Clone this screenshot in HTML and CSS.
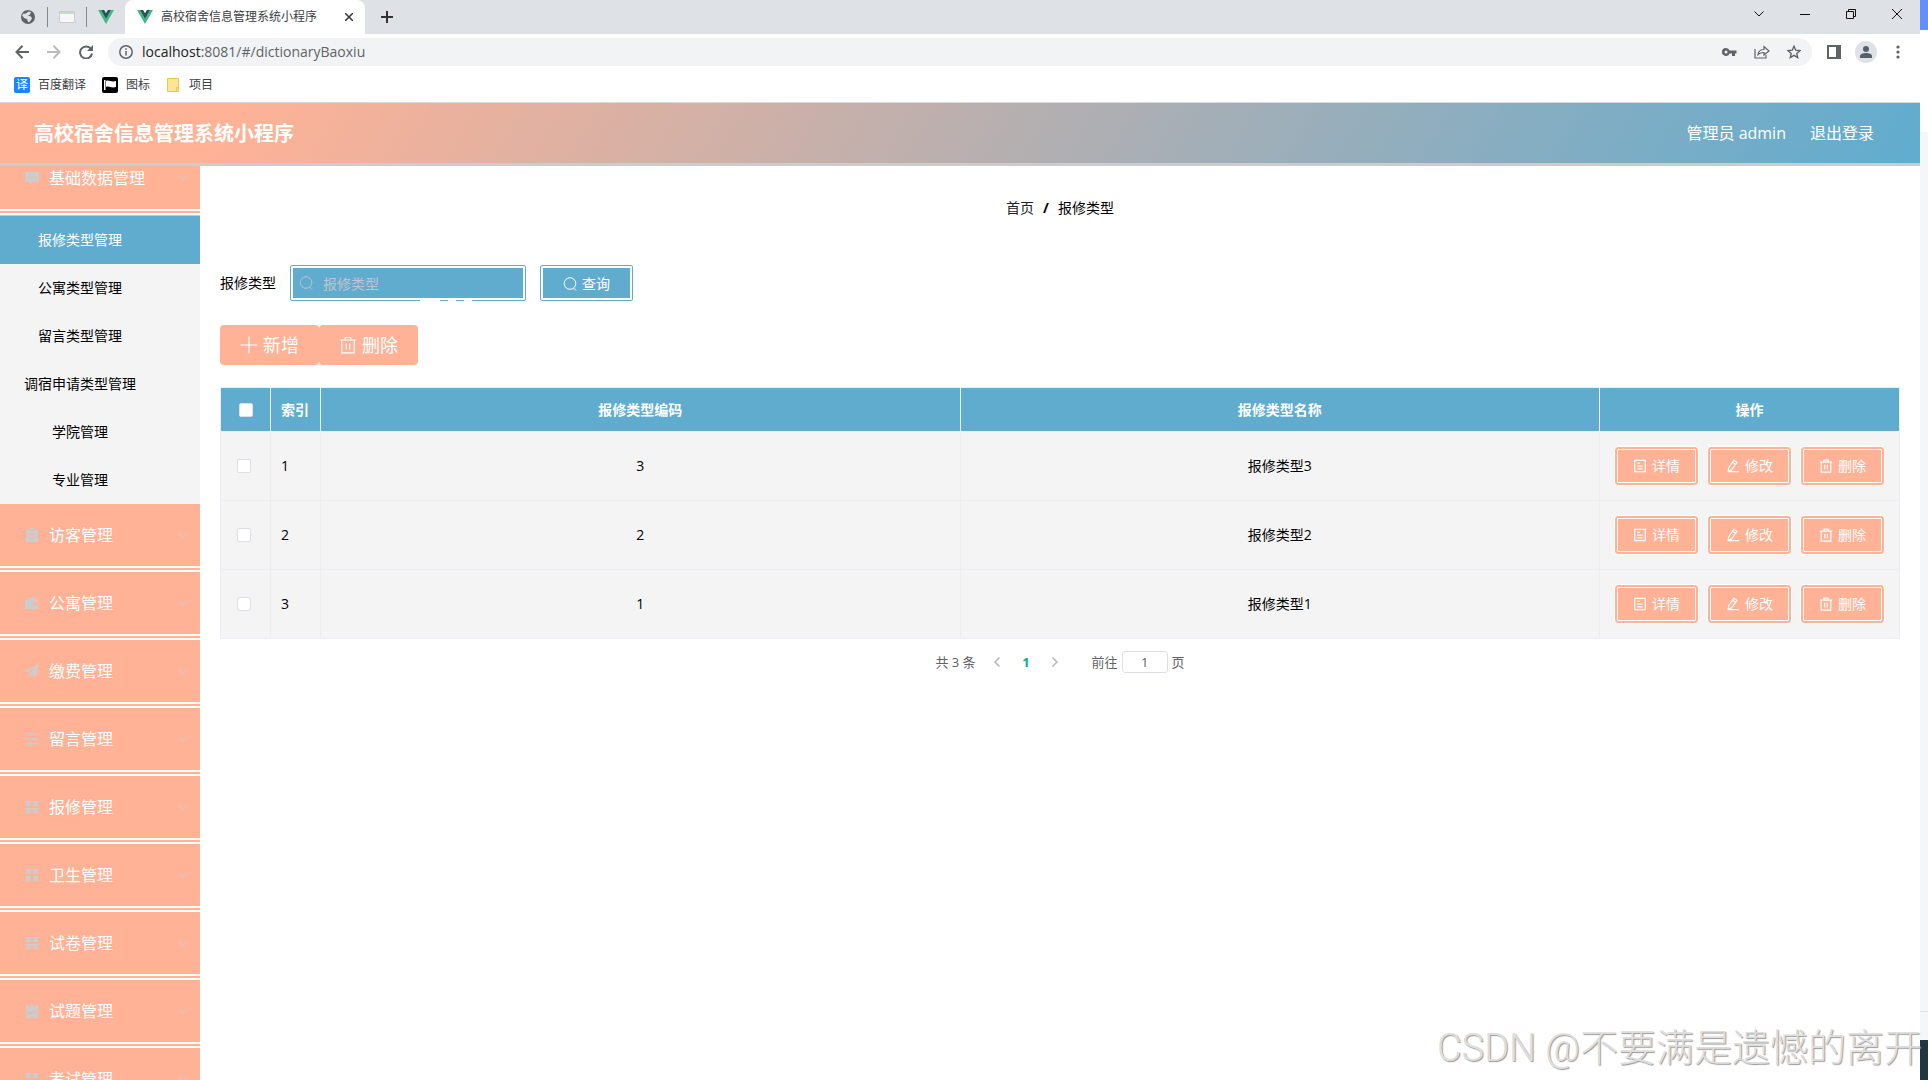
FILE: index.html
```html
<!DOCTYPE html>
<html lang="zh-CN">
<head>
<meta charset="utf-8">
<title>高校宿舍信息管理系统小程序</title>
<link rel="stylesheet" href="styles.css">
</head>
<body>
<svg class="defs" aria-hidden="true">
  <symbol id="vue" viewBox="0 0 16 14"><path fill="#41b883" d="M0 0h6l2 3.4L10 0h6L8 14z"/><path fill="#35495e" d="M3.2 0H6l2 3.4L10 0h2.800L8 8.400z"/></symbol>
  <symbol id="search" viewBox="0 0 14 14"><circle cx="7" cy="6.500" r="5.800"/><path d="M10.500 11l2.500 2.500"/></symbol>
  <symbol id="trash" viewBox="0 0 16 16"><path d="M1 3.500h14M5.500 3.200V1.300h5v1.900M2.500 3.500V15h11V3.500M6.500 6.500v5.500M9.500 6.500v5.500"/></symbol>
  <symbol id="plus" viewBox="0 0 16 16"><path d="M8 .5v15M.5 8h15"/></symbol>
  <symbol id="doc" viewBox="0 0 16 16"><path d="M2 1.500h12v13H2zM5 5h3M5 8.200h6M5 11.300h6"/></symbol>
  <symbol id="edit" viewBox="0 0 16 16"><path d="M2.500 14l.6-4L9 1.500l3.500 2.300L6.500 12.300zM7.500 3.700l3.500 2.300M2.500 14.500H15"/></symbol>
  <symbol id="down" viewBox="0 0 10 6"><path d="M.5 .5L5 5l4.500-4.500"/></symbol>
  <symbol id="grid" viewBox="0 0 14 14"><path d="M1 1h5v5H1zM8 1h5v5H8zM1 8h5v5H1zM8 8h5v5H8z"/></symbol>
  <symbol id="chat" viewBox="0 0 14 14"><path fill-rule="evenodd" d="M0 1h14v10H7.500L4.500 13.500V11H0zM3 5.500v1.200h1.200V5.500zM6.400 5.500v1.200h1.200V5.500zM9.800 5.500v1.200H11V5.500z"/></symbol>
  <symbol id="clip" viewBox="0 0 14 14"><path fill-rule="evenodd" d="M1 1.500h3V3h6V1.500h3V14H1zM3.500 5.500v1h7v-1zM3.500 9.500v1h7v-1zM5 0h4v2H5z"/></symbol>
  <symbol id="wallet" viewBox="0 0 14 14"><path fill-rule="evenodd" d="M0 3.500h3L8 .5l3 3h2V6h-3a2 2 0 0 0 0 4h3v3H0zM10 7.300h3.500v1.400H10z"/></symbol>
  <symbol id="plane" viewBox="0 0 14 14"><path d="M14 0L0 7l3 1.500L11 3 4.500 9.500V14l2.500-3 4 1.500z"/></symbol>
  <symbol id="sliders" viewBox="0 0 14 14"><path d="M0 1.500h3.500a1.500 1.500 0 0 1 2.500 0h7v1H6a1.500 1.500 0 0 1-2.500 0H0zM0 6.300h8a1.700 1.700 0 0 1 3 0h2v1.500h-2a1.700 1.700 0 0 1-3 0H0zM0 11.300h4.500a1.500 1.500 0 0 1 3 0H13v1H7.500a1.500 1.500 0 0 1-3 0H0z"/></symbol>
  <symbol id="check" viewBox="0 0 14 14"><path fill-rule="evenodd" d="M1 1.500h3V3h6V1.500h3V14H1zM3.200 8.200l3 2.800L11 6.300l-.7-.7-4.100 4-2.300-2.100zM5 0h4v2H5z"/></symbol>
</svg>

<div class="screen">
<div class="window">
  <div class="chrome">
    <div class="tabs">
      <svg class="tab-icon globe" width="16" height="16" viewBox="0 0 16 16"><circle cx="8" cy="8" r="7" fill="#5f6368"/><path fill="#dee1e6" d="M3 4.500c2 .5 4 0 5-2l3 .5-1 2.500-2 1 3 1 1 2-2 3-2 .8-.8-3L4 9 2.300 6.500z"/></svg>
      <i class="sep"></i>
      <svg class="tab-icon" width="16" height="12" viewBox="0 0 16 12"><path fill="#f7f7f7" stroke="#ccc" d="M.5.500h15v11H.5z"/><path fill="#bfe0c4" d="M1 1h14v2H1z"/></svg>
      <i class="sep"></i>
      <svg class="tab-icon" width="16" height="14"><use href="#vue"/></svg>
      <div class="tab">
        <svg width="16" height="14"><use href="#vue"/></svg>
        <span class="tab-title">高校宿舍信息管理系统小程序</span>
        <button class="plain" aria-label="关闭标签页"><svg width="8" height="8" viewBox="0 0 8 8" stroke="#333" stroke-width="1.500"><path d="M0 0l8 8M8 0L0 8"/></svg></button>
      </div>
      <button class="plain new-tab" aria-label="新标签页"><svg width="12" height="12" viewBox="0 0 12 12" stroke="#333" stroke-width="2"><path d="M6 0v12M0 6h12"/></svg></button>
      <div class="win-controls">
        <button class="plain" aria-label="搜索标签页"><svg width="10" height="6"><use href="#down"/></svg></button>
        <button class="plain" aria-label="最小化"><svg width="10" height="10" viewBox="0 0 10 10"><path d="M0 5.500h10"/></svg></button>
        <button class="plain" aria-label="还原"><svg width="10" height="10" viewBox="0 0 10 10"><path d="M.5 2.500h7v7h-7zM2.500 2.500v-2h7v7h-2"/></svg></button>
        <button class="plain" aria-label="关闭"><svg width="10" height="10" viewBox="0 0 10 10"><path d="M0 0l10 10M10 0L0 10"/></svg></button>
      </div>
    </div>
    <div class="toolbar">
      <button class="plain" aria-label="后退"><svg width="14" height="14" viewBox="0 0 14 14" stroke="#5f6368" stroke-width="2"><path d="M14 7H1.500M7.500 .8L1.500 7l6 6.200"/></svg></button>
      <button class="plain" aria-label="前进"><svg width="14" height="14" viewBox="0 0 14 14" stroke="#bbb" stroke-width="2"><path d="M0 7h12.500M6.500 .8l6 6.200-6 6.200"/></svg></button>
      <button class="plain" aria-label="刷新"><svg width="14" height="14" viewBox="0 0 14 14" stroke="#5f6368" stroke-width="2"><path d="M12 4A6 6 0 1 0 13 8.500"/><path fill="#5f6368" stroke="none" d="M14 0v6H8z"/></svg></button>
      <div class="omnibox">
        <svg width="14" height="14" viewBox="0 0 14 14" stroke="#5f6368" stroke-width="1.500"><circle cx="7" cy="7" r="6.200"/><path d="M7 6v4.500M7 3.300v1.500"/></svg>
        <span class="url"><b>localhost</b>:8081/#/dictionaryBaoxiu</span>
        <svg width="15" height="10" viewBox="0 0 15 10"><path fill="#5f6368" fill-rule="evenodd" d="M4 1a4 4 0 1 0 3.600 5.500H10V9h3V6.500h1.500v-3H7.600A4 4 0 0 0 4 1zm0 2.500a1.500 1.500 0 1 1 0 3 1.500 1.500 0 0 1 0-3z"/></svg>
        <svg width="16" height="14" viewBox="0 0 16 14" stroke="#5f6368" stroke-width="1.200"><path d="M1 4v9h11v-3M4 9.500c.5-3.500 3-5 6-5V1.500L15 6l-5 4V7.500c-3 0-4.500.5-6 2z"/></svg>
        <svg width="14" height="14" viewBox="0 0 14 14" stroke="#5f6368" stroke-width="1.400"><path d="M7 1.300l1.700 3.900 4.300.4-3.200 2.800.9 4.200L7 10.400l-3.700 2.200.9-4.200L1 5.600l4.300-.4z"/></svg>
      </div>
      <div class="tools">
        <svg width="14" height="14" viewBox="0 0 14 14"><path fill="#5f6368" fill-rule="evenodd" d="M0 0h14v14H0zM2 2v10h7V2z"/></svg>
        <svg width="22" height="22" viewBox="0 0 22 22"><circle cx="11" cy="11" r="11" fill="#dee1e6"/><g fill="#55606f"><circle cx="11" cy="8" r="3"/><path d="M5 17v-2c0-4 12-4 12 0v2z"/></g></svg>
        <svg width="4" height="14" viewBox="0 0 4 14"><g fill="#5f6368"><circle cx="2" cy="2" r="1.600"/><circle cx="2" cy="7" r="1.600"/><circle cx="2" cy="12" r="1.600"/></g></svg>
      </div>
    </div>
    <nav class="bookmarks">
      <a href="#"><span class="fanyi">译</span>百度翻译</a>
      <a href="#"><svg width="16" height="16" viewBox="0 0 16 16"><rect width="16" height="16" rx="2"/><path fill="#fff" d="M2 3h1.500v10H2zM4 4c3-1.500 5 1.500 10 0v6c-5 1.500-7-1.500-10 0z"/></svg>图标</a>
      <a href="#"><svg class="folder" width="12" height="14" viewBox="0 0 12 14"><path fill="#ffe591" stroke="#ecc94b" d="M.5.500h11v13H.5z"/><path stroke="#ecc94b" fill="#ffe591" d="M9.500 9.500h2v4h-2z"/></svg>项目</a>
    </nav>
  </div>

  <header class="app-header">
    <h1>高校宿舍信息管理系统小程序</h1>
    <span>管理员 admin</span>
    <a href="#">退出登录</a>
  </header>

  <div class="app">
    <aside class="side">
      <ul class="menu">
        <li><button class="item"><svg width="14" height="14"><use href="#chat"/></svg>基础数据管理<svg class="arrow" width="10" height="6"><use href="#down"/></svg></button>
          <ul class="sub">
            <li><a class="active" href="#">报修类型管理</a></li>
            <li><a href="#">公寓类型管理</a></li>
            <li><a href="#">留言类型管理</a></li>
            <li><a href="#">调宿申请类型管理</a></li>
            <li><a href="#">学院管理</a></li>
            <li><a href="#">专业管理</a></li>
          </ul>
        </li>
        <li><button class="item"><svg width="14" height="14"><use href="#clip"/></svg>访客管理<svg class="arrow" width="10" height="6"><use href="#down"/></svg></button></li>
        <li><button class="item"><svg width="14" height="14"><use href="#wallet"/></svg>公寓管理<svg class="arrow" width="10" height="6"><use href="#down"/></svg></button></li>
        <li><button class="item"><svg width="14" height="14"><use href="#plane"/></svg>缴费管理<svg class="arrow" width="10" height="6"><use href="#down"/></svg></button></li>
        <li><button class="item"><svg width="14" height="14"><use href="#sliders"/></svg>留言管理<svg class="arrow" width="10" height="6"><use href="#down"/></svg></button></li>
        <li><button class="item"><svg width="14" height="14"><use href="#grid"/></svg>报修管理<svg class="arrow" width="10" height="6"><use href="#down"/></svg></button></li>
        <li><button class="item"><svg width="14" height="14"><use href="#grid"/></svg>卫生管理<svg class="arrow" width="10" height="6"><use href="#down"/></svg></button></li>
        <li><button class="item"><svg width="14" height="14"><use href="#grid"/></svg>试卷管理<svg class="arrow" width="10" height="6"><use href="#down"/></svg></button></li>
        <li><button class="item"><svg width="14" height="14"><use href="#check"/></svg>试题管理<svg class="arrow" width="10" height="6"><use href="#down"/></svg></button></li>
        <li><button class="item"><svg width="14" height="14"><use href="#grid"/></svg>考试管理<svg class="arrow" width="10" height="6"><use href="#down"/></svg></button></li>
      </ul>
    </aside>

    <main class="main">
      <nav class="crumbs"><a href="#">首页</a><b>/</b><span>报修类型</span></nav>

      <form class="filter">
        <label for="type">报修类型</label>
        <div class="field">
          <svg width="14" height="14"><use href="#search"/></svg>
          <input id="type" type="text" placeholder="报修类型">
          <i class="gap-a"></i><i class="gap-b"></i><i class="gap-c"></i>
        </div>
        <div class="query"><button type="button"><svg width="14" height="14"><use href="#search"/></svg>查询</button></div>
      </form>

      <div class="actions">
        <button><svg width="18" height="18"><use href="#plus"/></svg>新增</button>
        <button><svg width="18" height="18"><use href="#trash"/></svg>删除</button>
      </div>

      <table class="grid">
        <colgroup><col class="narrow"><col class="narrow"><col><col><col class="ops-col"></colgroup>
        <thead>
          <tr><th class="tick"><input type="checkbox" aria-label="全选"></th><th class="idx">索引</th><th>报修类型编码</th><th>报修类型名称</th><th>操作</th></tr>
        </thead>
        <tbody>
          <tr><td class="tick"><input type="checkbox" aria-label="选择 1"></td><td class="idx">1</td><td>3</td><td>报修类型3</td>
            <td><div class="ops"><button><svg width="14" height="14"><use href="#doc"/></svg>详情</button><button><svg width="14" height="14"><use href="#edit"/></svg>修改</button><button><svg width="14" height="14"><use href="#trash"/></svg>删除</button></div></td></tr>
          <tr><td class="tick"><input type="checkbox" aria-label="选择 2"></td><td class="idx">2</td><td>2</td><td>报修类型2</td>
            <td><div class="ops"><button><svg width="14" height="14"><use href="#doc"/></svg>详情</button><button><svg width="14" height="14"><use href="#edit"/></svg>修改</button><button><svg width="14" height="14"><use href="#trash"/></svg>删除</button></div></td></tr>
          <tr><td class="tick"><input type="checkbox" aria-label="选择 3"></td><td class="idx">3</td><td>1</td><td>报修类型1</td>
            <td><div class="ops"><button><svg width="14" height="14"><use href="#doc"/></svg>详情</button><button><svg width="14" height="14"><use href="#edit"/></svg>修改</button><button><svg width="14" height="14"><use href="#trash"/></svg>删除</button></div></td></tr>
        </tbody>
      </table>

      <nav class="pager">
        <span>共 3 条</span>
        <button class="plain" aria-label="上一页"><svg width="6" height="10" viewBox="0 0 6 10"><path d="M5.500 .5L1 5l4.500 4.500"/></svg></button>
        <button class="plain current">1</button>
        <button class="plain" aria-label="下一页"><svg width="6" height="10" viewBox="0 0 6 10"><path d="M.5 .5L5 5 .5 9.500"/></svg></button>
        <label for="page">前往</label>
        <input id="page" type="text" value="1">
        <span>页</span>
      </nav>
    </main>
  </div>
</div>
<div class="edge" aria-hidden="true"><i class="e1"></i><i class="e2"></i><i class="e3"></i><i class="e4"></i><i class="e5"></i></div>
<div class="watermark">CSDN @不要满是遗憾的离开</div>
</div>
</body>
</html>
```
FILE: styles.css
```css
:root {
  --peach: #ffb296;
  --blue: #60accf;
  --line: #ebeef5;
}
* { box-sizing: border-box; }
body {
  margin: 0;
  font: 14px/20px "Open Sans", "Noto Sans CJK SC", sans-serif;
  color: #000;
  background: #fff;
}
a { color: inherit; text-decoration: none; }
ul { list-style: none; margin: 0; padding: 0; }
button, input { font: inherit; color: inherit; }
button { display: flex; align-items: center; cursor: pointer; }
svg { flex: none; display: block; fill: none; }
.defs { position: absolute; width: 0; height: 0; }
.plain { border: 0; padding: 0; background: none; }

.screen { position: relative; display: flex; height: 100vh; overflow: hidden; }
.window { flex: 1; min-width: 0; display: flex; flex-direction: column; }

/* browser frame */
.chrome { flex: none; font-size: 12px; color: #3c4043; border-bottom: 1px solid #d8dadd; }
.tabs { display: flex; align-items: center; height: 34px; padding-left: 20px; background: #dee1e6; }
.tab-icon { margin: 0 11px; }
.tab-icon.globe { margin-left: 0; }
.sep { width: 1px; height: 20px; background: #85888c; }
.tab {
  display: flex; align-items: center; gap: 8px;
  width: 240px; height: 34px; padding: 0 8px 0 12px;
  background: #fff; border-radius: 8px 8px 0 0;
}
.tab-title { flex: 1; white-space: nowrap; }
.tab .plain { padding: 4px; }
.new-tab { margin-left: 16px; }
.win-controls { display: flex; align-items: center; gap: 36px; margin-left: auto; padding: 0 18px 6px 0; }
.win-controls svg { stroke: #111; }
.toolbar { display: flex; align-items: center; height: 36px; padding-left: 15px; gap: 18px; }
.omnibox {
  flex: 1; display: flex; align-items: center; gap: 17px;
  height: 28px; margin: 0 -3px; padding: 0 11px; border-radius: 14px; background: #f1f3f4;
}
.url { flex: 1; margin-left: -8px; font-size: 14px; color: #5f6368; }
.url b { font-weight: 400; color: #202124; }
.tools { display: flex; align-items: center; gap: 14px; padding-right: 20px; }
.tools svg:last-child { margin-left: 5px; }
.bookmarks { display: flex; align-items: center; height: 32px; padding: 0 14px 2px; gap: 16px; }
.bookmarks a { display: flex; align-items: center; gap: 8px; }
.bookmarks rect { fill: #000; }
.folder { margin: 0 2px 0 1px; }
.fanyi { width: 16px; height: 16px; border-radius: 2px; background: #1787fb; color: #fff; font-size: 12px; line-height: 16px; text-align: center; }

/* application */
.app-header {
  flex: none; display: flex; align-items: center; height: 63px;
  padding: 0 46px 0 34px; gap: 24px;
  border-bottom: 3px solid #ccc;
  background: linear-gradient(120deg, var(--peach) 12%, var(--blue)) border-box;
  color: #fff; font-size: 16px;
}
.app-header h1 { flex: 1; margin: 0; padding-top: 2px; font-size: 20px; line-height: 28px; }
.app { flex: 1; min-height: 0; display: flex; }
.side { flex: none; width: 200px; overflow: hidden; }
/* the menu is scrolled down a little */
.menu { margin-top: -19px; background: #fff; }
.item {
  width: 100%; height: 68px; padding: 0 12px 0 25px; gap: 10px;
  border: 0; border-bottom: 6px double #fff;
  background: var(--peach); color: #fff; font-size: 16px;
}
.item svg { fill: #ccc; }
.item .arrow { margin-left: auto; fill: none; stroke: #ccc; }
.sub { border-top: 1px solid var(--peach); background: #f4f4f4; }
.sub a { display: block; padding-right: 40px; line-height: 48px; text-align: center; white-space: nowrap; }
.sub .active { background: var(--blue); color: #fff; }

.main { flex: 1; min-width: 0; padding: 32px 20px; }
.crumbs { display: flex; justify-content: center; gap: 9px; }
.crumbs a { color: #222; }
.filter { display: flex; align-items: center; margin-top: 47px; }
.field, .query { height: 36px; padding: 2px; border: 1px solid var(--blue); border-radius: 2px; }
.field { position: relative; display: flex; align-items: center; width: 236px; margin: 0 14px; }
.field svg { position: absolute; left: 8px; stroke: #c0c4cc; }
.field input { width: 100%; height: 30px; padding: 0 30px; border: 0; border-radius: 0; background: var(--blue); }
.field input::placeholder { color: #c0c4cc; opacity: 1; }
.field i { position: absolute; bottom: -1px; height: 1px; background: #fff; }
.field .gap-a { left: 129px; width: 20px; }
.field .gap-b { left: 157px; width: 8px; }
.field .gap-c { left: 173px; width: 8px; }
.query button { height: 30px; padding: 2px 20px 0; gap: 5px; border: 0; background: var(--blue); color: #fff; }
.query svg, .actions svg, .ops svg { stroke: #fff; }
.actions { display: flex; margin-top: 24px; }
.actions button { height: 40px; padding: 0 20px; gap: 5px; border: 0; border-radius: 4px; background: var(--peach); color: #fff; font-size: 18px; }

.grid { width: 100%; margin-top: 22px; table-layout: fixed; border-collapse: collapse; text-align: center; }
.narrow { width: 50px; }
.ops-col { width: 300px; }
.grid th, .grid td { padding: 0; border: 1px solid var(--line); }
.grid th { height: 44px; background: var(--blue); color: #fff; }
.grid td { height: 69px; background: #f4f4f4; }
.grid .idx { padding-left: 10px; text-align: left; }
.grid td.tick { padding-right: 3px; }
.tick input {
  appearance: none; display: block; width: 14px; height: 14px; margin: 0 auto;
  border: 1px solid #dcdfe6; border-radius: 2px; background: #fff;
}
.ops { display: flex; justify-content: center; gap: 8px; }
.ops button { height: 40px; padding: 0 15px; gap: 5px; border: 4px double #fff; border-radius: 4px; background: var(--peach); color: #fff; }
.ops svg { stroke-width: 1.3; }

.pager { display: flex; align-items: center; justify-content: center; margin-top: 12px; font-size: 13px; color: #606266; }
.pager .plain { justify-content: center; width: 29px; height: 22px; margin: 0; }
.pager svg { stroke: #b0b4bc; stroke-width: 1.5; }
.pager span:first-child { margin-right: 7px; }
.pager .current { color: #00b386; font-weight: 700; }
.pager label { margin-left: 22px; }
.pager input { width: 46px; height: 22px; margin: 0 4px; padding: 0; border: 1px solid #dcdfe6; border-radius: 3px; text-align: center; }

/* strip of the desktop beside the window */
.edge { flex: none; display: flex; flex-direction: column; width: 8px; }
.e1 { height: 30px; background: #618fff; }
.e2 { height: 102px; background: #fff; }
.e3 { flex: 1; background: #f5f6f8; border-bottom: 1px solid #dfe1e5; }
.e4 { height: 28px; background: #f5f6f8; }
.e5 { height: 40px; background: #20373f; }
.watermark {
  position: absolute; right: 6px; bottom: 4px;
  font: 300 38px/56px Roboto, "Noto Sans CJK SC", sans-serif;
  color: #dedede; text-shadow: 1px 1px 1px #999; white-space: nowrap;
}
```
